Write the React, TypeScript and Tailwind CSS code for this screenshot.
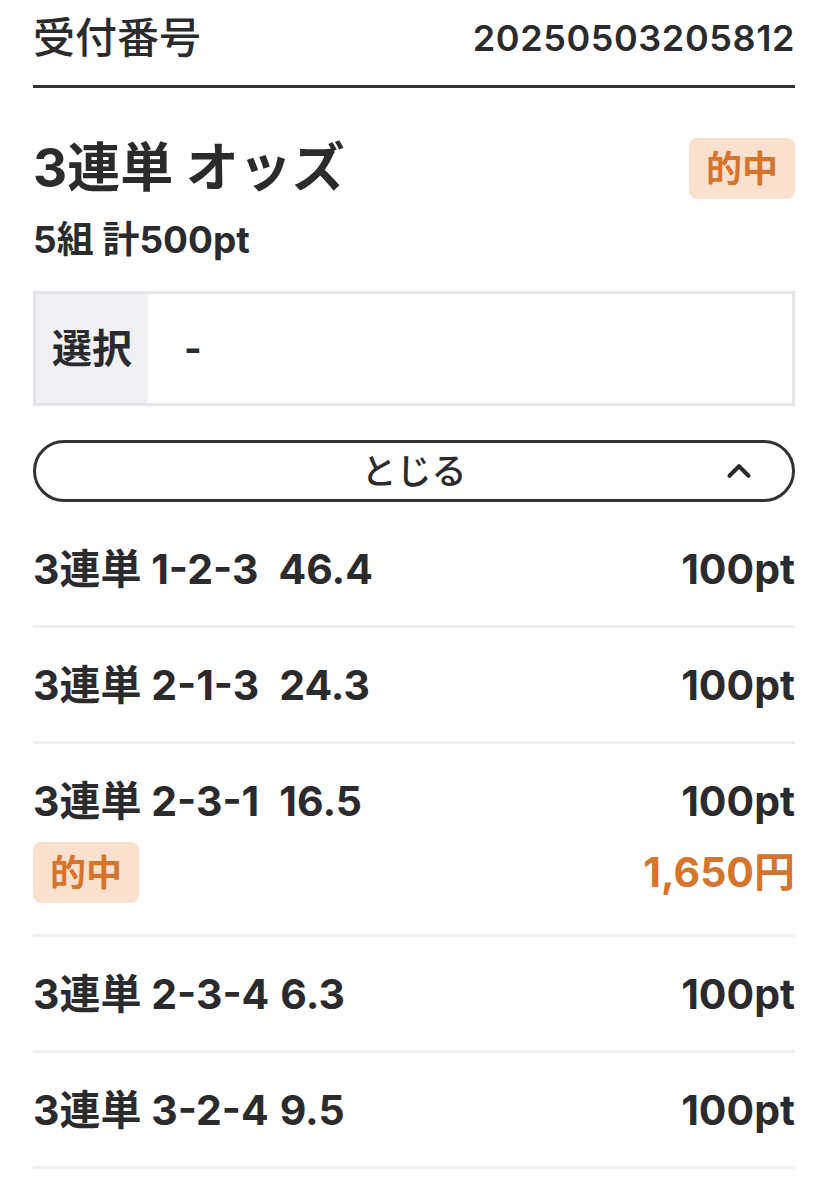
import { ChevronUp } from "lucide-react";

type Bet = {
  combo: string;
  odds: string;
  amount: string;
  payout?: string;
};

const bets: Bet[] = [
  { combo: "1-2-3", odds: "46.4", amount: "100pt" },
  { combo: "2-1-3", odds: "24.3", amount: "100pt" },
  { combo: "2-3-1", odds: "16.5", amount: "100pt", payout: "1,650円" },
  { combo: "2-3-4", odds: "6.3", amount: "100pt" },
  { combo: "3-2-4", odds: "9.5", amount: "100pt" },
];

const font = {
  fontFamily: '"Inter", "Noto Sans CJK JP", sans-serif',
};

function HitBadge() {
  return (
    <span className="inline-flex h-[61px] items-center rounded-[8px] bg-[#fbe1cd] px-[17px] text-[36px] font-bold leading-none text-[#d5742c]">
      的中
    </span>
  );
}

export default function App() {
  return (
    <main className="min-h-screen bg-white px-[33px] text-[#2b2b2d]" style={font}>
      {/* HEADER */}
      <div className="flex items-center justify-between border-b-[3px] border-[#333335] pt-[14px] pb-[23px]">
        <span className="text-[42px] font-medium leading-[48px]">受付番号</span>
        <span className="text-[36px] font-semibold leading-[48px] tracking-[0.6px]">
          20250503205812
        </span>
      </div>

      {/* TITLE */}
      <div className="mt-[50px] flex h-[61px] items-center justify-between">
        <h1 className="text-[53px] font-bold leading-none">3連単 オッズ</h1>
        <HitBadge />
      </div>
      <div className="mt-[21px] text-[37px] font-bold leading-[40px]">5組 計500pt</div>

      {/* SELECTION TABLE */}
      <div className="mt-[31px] flex h-[115px] border-[3px] border-[#e4e4e9]">
        <div className="flex w-[112px] items-center justify-center bg-[#f0f0f5] text-[40px] font-bold">
          選択
        </div>
        <div className="flex items-center pl-[36px] text-[38px] font-bold">-</div>
      </div>

      {/* TOGGLE */}
      <button className="relative mt-[34px] flex h-[62px] w-full items-center justify-center rounded-full border-[3px] border-[#333335] text-[35px] font-medium">
        とじる
        <ChevronUp className="absolute right-[34px] h-[38px] w-[38px]" strokeWidth={2.6} />
      </button>

      {/* BETS */}
      <div className="mt-[10px]">
        {bets.map((b) => (
          <div key={b.combo} className="border-b-[3px] border-[#efeff4] pt-[33px] pb-[32px]">
            <div className="flex items-center justify-between text-[41px] font-bold leading-[48px]">
              <span className="flex">
                <span>3連単 {b.combo}</span>
                <span className={b.odds.length > 3 ? "ml-[20px]" : "ml-[11px]"}>{b.odds}</span>
              </span>
              <span>{b.amount}</span>
            </div>
            {b.payout && (
              <div className="mt-[17px] -mb-[2px] flex items-center justify-between">
                <HitBadge />
                <span className="text-[41px] font-bold text-[#d5742c]">{b.payout}</span>
              </div>
            )}
          </div>
        ))}
      </div>
    </main>
  );
}
